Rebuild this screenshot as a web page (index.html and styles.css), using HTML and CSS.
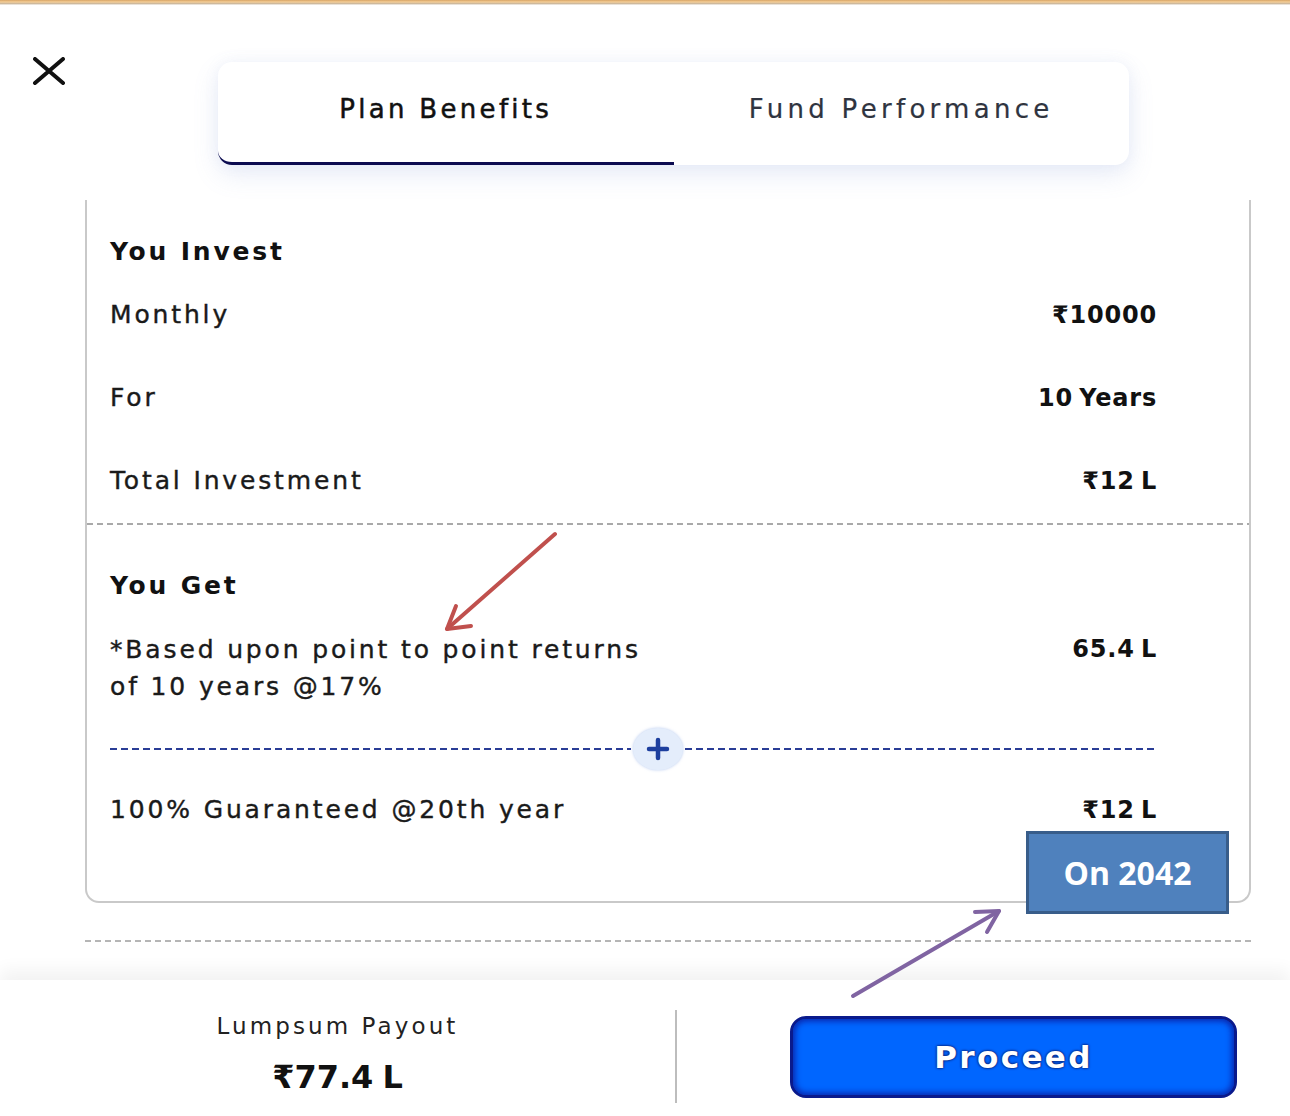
FILE: index.html
```html
<!DOCTYPE html>
<html>
<head>
<meta charset="utf-8">
<link rel="stylesheet" href="styles.css">
</head>
<body>
<div class="page">
  <div class="topline"></div>
  <header class="header">
    <button class="close" aria-label="Close">
      <svg width="34" height="28" viewBox="0 0 34 28"><path d="M3 2 L31 26 M31 2 L3 26" stroke="#111" stroke-width="4" stroke-linecap="round"/></svg>
    </button>
    <nav class="tabs">
      <div class="tab active">Plan Benefits</div>
      <div class="tab tab-wide">Fund Performance</div>
    </nav>
  </header>

  <section class="card">
    <div class="section invest">
      <h2 class="title">You Invest</h2>
      <div class="row"><span class="label">Monthly</span><span class="value">₹10000</span></div>
      <div class="row"><span class="label">For</span><span class="value">10 Years</span></div>
      <div class="row"><span class="label">Total Investment</span><span class="value">₹12 L</span></div>
    </div>
    <div class="section get">
      <h2 class="title">You Get</h2>
      <div class="row multi"><span class="label">*Based upon point to point returns<br>of 10 years @17%</span><span class="value">65.4 L</span></div>
      <div class="plusline">
        <span class="dash dash-left"></span>
        <span class="plus"><svg width="24" height="24" viewBox="0 0 24 24"><path d="M12 3 V21 M3 12 H21" stroke="#1d3f9e" stroke-width="4.5" stroke-linecap="round"/></svg></span>
        <span class="dash"></span>
      </div>
      <div class="row"><span class="label">100% Guaranteed @20th year</span><span class="value">₹12 L</span></div>
    </div>
  </section>

  <div class="bottomdash"></div>

  <footer class="footer">
    <div class="payout">
      <div class="payout-label">Lumpsum Payout</div>
      <div class="payout-value">₹77.4 L</div>
    </div>
    <div class="vdivider"></div>
    <div class="action">
      <button class="proceed">Proceed</button>
    </div>
  </footer>

  <div class="callout">On 2042</div>
  <svg class="arrows" width="1290" height="1116" viewBox="0 0 1290 1116">
    <g stroke="#c0504d" stroke-width="4" stroke-linecap="round" fill="none">
      <path d="M555 534 L447 629"/>
      <path d="M447 629 L456 606 M447 629 L471 626"/>
    </g>
    <g stroke="#8064a2" stroke-width="4" stroke-linecap="round" fill="none">
      <path d="M853 996 L999 911"/>
      <path d="M999 911 L975 912 M999 911 L987 932"/>
    </g>
  </svg>
</div>
</body>
</html>
```
FILE: styles.css
```css
* { box-sizing: border-box; }
html, body { margin: 0; padding: 0; background: #fff; }
body { font-family: "DejaVu Sans", Inter, sans-serif; color: #111; }
.page { position: relative; width: 1290px; height: 1116px; overflow: hidden; background: #fff; }

.topline { height: 5px; background: linear-gradient(#d7a465 0, #f5cf98 40%, #c8b59c 75%, #fff 100%); }

.header { display: flex; align-items: flex-start; padding: 52px 0 0 32px; height: 195px; }
.close { border: 0; background: none; padding: 0; margin: 0; width: 34px; height: 28px; display: block; }
.close svg { display: block; }
.tabs {
  margin-left: 152px; margin-top: 5px;
  width: 911px; height: 103px;
  display: flex; background: #fff; border-radius: 14px;
  box-shadow: 0 10px 26px rgba(120, 140, 210, 0.16), 0 0 14px rgba(150, 165, 220, 0.10);
  position: relative; z-index: 2;
}
.tab {
  flex: 1; display: flex; justify-content: center; align-items: flex-start;
  padding-top: 32px; font-size: 26px; color: #2f3440; letter-spacing: 3.3px; line-height: 30px;
  -webkit-text-stroke: 0.2px #2f3440;
}
.tab-wide { letter-spacing: 4.3px; }
.tab.active { color: #111; -webkit-text-stroke: 0.5px #111; border-bottom: 3px solid #0b0b50; border-bottom-left-radius: 14px; }

.card {
  margin-left: 85px; width: 1166px; height: 703px;
  border: 2px solid #c9c9c9; border-top: 0;
  border-radius: 0 0 14px 14px;
  padding: 0 93px 0 23px;
}
.section { display: flex; flex-direction: column; }
.invest { padding-top: 34px; height: 323px; }
.get {
  height: 380px; padding-top: 45px;
  margin: 0 -93px 0 -23px; padding-left: 23px; padding-right: 93px;
  background-image: repeating-linear-gradient(90deg, #a9a9a9 0 6px, transparent 6px 10px);
  background-size: 100% 2px; background-repeat: no-repeat; background-position: 0 0;
}
.title { margin: 0; font-size: 25px; font-weight: 700; line-height: 36px; height: 36px; color: #111; letter-spacing: 2.8px; }
.invest .title { margin-bottom: 25px; }
.row { display: flex; justify-content: space-between; align-items: flex-start; line-height: 40px; font-size: 25px; }
.invest .row + .row { margin-top: 43px; }
.label { color: #1a1a1a; letter-spacing: 2.85px; -webkit-text-stroke: 0.4px #1a1a1a; }
.value { font-size: 24px; font-weight: 700; color: #111; letter-spacing: 0.8px; word-spacing: -3px; margin-right: -1px; }
.get .title { margin-bottom: 27px; }
.multi { line-height: 37px; }
.plusline { display: flex; align-items: center; height: 44px; margin: 22px 0 19px 0; margin-right: -2px; }
.dash { flex: 1; height: 2px; background-image: repeating-linear-gradient(90deg, #2a3d96 0 7px, transparent 7px 11px); }
.dash-left { flex: 0 0 521px; }
.plus {
  width: 50px; height: 42px; border-radius: 50%; background: #e4edfb;
  box-shadow: 0 0 3px rgba(140, 170, 230, 0.6);
  display: flex; align-items: center; justify-content: center; margin: 0 2px;
}
.plus svg { display: block; }

.bottomdash {
  margin: 37px 0 0 85px; width: 1166px; height: 2px;
  background-image: repeating-linear-gradient(90deg, #b5b5b5 0 6px, transparent 6px 10px);
}

.footer {
  position: absolute; left: 0; right: 0; bottom: 0; height: 136px;
  display: flex; align-items: stretch; background: #fff;
  box-shadow: 0 -10px 16px rgba(0, 0, 0, 0.05);
}
.payout { width: 675px; display: flex; flex-direction: column; align-items: center; padding-top: 30px; }
.payout-label { font-size: 23px; color: #222; line-height: 32px; letter-spacing: 3.1px; }
.payout-value { font-size: 32px; font-weight: 700; color: #111; margin-top: 15px; line-height: 40px; letter-spacing: 0; word-spacing: -2px; }
.vdivider { width: 2px; background: #bdbdbd; margin: 30px 0 13px 0; }
.action { flex: 1; padding: 36px 53px 18px 113px; }
.proceed {
  width: 100%; height: 82px; border-radius: 16px;
  background: #0066ff; border: 3px solid #0a1a8c;
  box-shadow: inset 0 0 6px 2px #0a22a8;
  color: #fff; font-family: "DejaVu Sans", sans-serif; font-size: 31px; font-weight: 700; letter-spacing: 2.4px;
  text-shadow: 0 0 3px #0b1c6a, 0 0 2px #0b1c6a;
}

.callout {
  position: absolute; left: 1026px; top: 831px; width: 203px; height: 83px;
  background: #4f81bd; border: 3px solid #385d8a;
  color: #fff; font-family: "Open Sans", sans-serif; font-weight: 700; font-size: 32px;
  display: flex; align-items: center; justify-content: center; z-index: 3;
}
.arrows { position: absolute; left: 0; top: 0; pointer-events: none; z-index: 4; }
```
